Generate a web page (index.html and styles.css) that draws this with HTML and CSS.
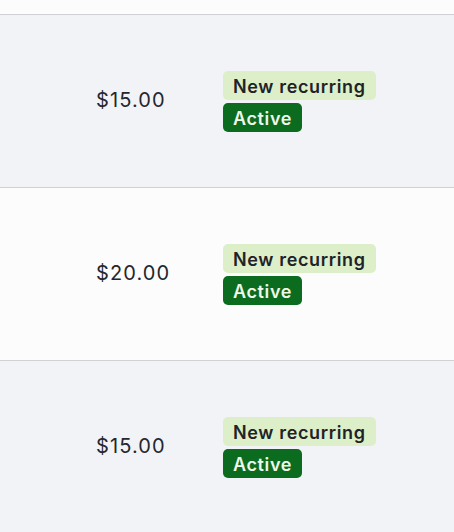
FILE: index.html
```html
<!DOCTYPE html>
<html>
<head>
<meta charset="utf-8">
<link rel="stylesheet" href="styles.css">
</head>
<body>
<div class="table">
  <div class="top"></div>
  <div class="row alt">
    <div class="amount">$15.00</div>
    <div class="badges">
      <span class="badge badge-light">New recurring</span>
      <span class="badge badge-dark">Active</span>
    </div>
  </div>
  <div class="row">
    <div class="amount">$20.00</div>
    <div class="badges">
      <span class="badge badge-light">New recurring</span>
      <span class="badge badge-dark">Active</span>
    </div>
  </div>
  <div class="row alt">
    <div class="amount">$15.00</div>
    <div class="badges">
      <span class="badge badge-light">New recurring</span>
      <span class="badge badge-dark">Active</span>
    </div>
  </div>
</div>
</body>
</html>
```
FILE: styles.css
```css
html, body {
  margin: 0;
  padding: 0;
  background: #fcfcfd;
  font-family: Inter, "Noto Sans", sans-serif;
  color: #1f2328;
}
.table {
  display: flex;
  flex-direction: column;
}
.top {
  height: 14px;
  background: #fcfcfd;
}
.row {
  display: grid;
  grid-template-columns: 223px 1fr;
  align-items: center;
  height: 172px;
  border-top: 1px solid #cfd1d7;
  background: #fcfcfd;
}
.row.alt {
  background: #f2f3f7;
}
.amount {
  padding-left: 96px;
  padding-bottom: 2px;
  font-size: 20px;
  letter-spacing: 1.1px;
  color: #24272c;
}
.badges {
  display: flex;
  flex-direction: column;
  align-items: flex-start;
  gap: 3px;
  padding-top: 1px;
}
.badge {
  display: inline-flex;
  align-items: center;
  height: 28px;
  padding: 1px 10px 0;
  border-radius: 5px;
  font-size: 18px;
  font-weight: 600;
  letter-spacing: 0.65px;
}
.badge-light {
  background: #dcefc9;
  color: #1f2328;
}
.badge-dark {
  background: #0b6b1f;
  color: #eef8ea;
}
```
